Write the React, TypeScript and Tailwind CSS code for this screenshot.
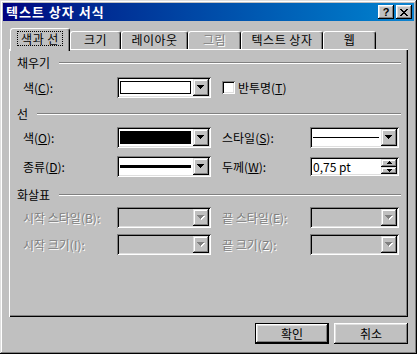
import React from "react";

const RAISED =
  "shadow-[inset_-1px_-1px_#000,inset_1px_1px_#dfdfdf,inset_-2px_-2px_#808080,inset_2px_2px_#fff]";
const BTN =
  "shadow-[inset_-1px_-1px_#000,inset_1px_1px_#fff,inset_-2px_-2px_#808080,inset_2px_2px_#dfdfdf]";
const SUNKEN =
  "shadow-[inset_1px_1px_#808080,inset_-1px_-1px_#fff,inset_2px_2px_#000,inset_-2px_-2px_#dfdfdf]";
const DIS = "text-[#808080] [text-shadow:1px_1px_0_#fff]";

function Arrow({ disabled = false }: { disabled?: boolean }) {
  const rows: [number, number][] = [
    [0, 7],
    [1, 5],
    [2, 3],
    [3, 1],
  ];
  return (
    <svg width="8" height="5" viewBox="0 0 8 5" shapeRendering="crispEdges">
      {disabled &&
        rows.map(([y, w], i) => (
          <rect key={"s" + i} x={y + 1} y={y + 1} width={w} height={1} fill="#fff" />
        ))}
      {rows.map(([y, w], i) => (
        <rect key={i} x={y} y={y} width={w} height={1} fill={disabled ? "#808080" : "#000"} />
      ))}
    </svg>
  );
}

function SmallArrow({ up }: { up: boolean }) {
  const rows: [number, number][] = up
    ? [
        [2, 1],
        [1, 3],
        [0, 5],
      ]
    : [
        [0, 5],
        [1, 3],
        [2, 1],
      ];
  return (
    <svg width="5" height="3" viewBox="0 0 5 3" shapeRendering="crispEdges">
      {rows.map(([x, w], i) => (
        <rect key={i} x={x} y={i} width={w} height={1} fill="#000" />
      ))}
    </svg>
  );
}

function Combo({
  width,
  disabled = false,
  children,
}: {
  width: string;
  disabled?: boolean;
  children?: React.ReactNode;
}) {
  return (
    <div className={`${width} h-[21px] p-[2px] flex ${SUNKEN} ${disabled ? "bg-[#c0c0c0]" : "bg-white"}`}>
      <div className="flex-1 min-w-0 flex">{children}</div>
      <div className={`w-[16px] h-full bg-[#c0c0c0] flex items-center justify-center ${RAISED}`}>
        <Arrow disabled={disabled} />
      </div>
    </div>
  );
}

function Swatch({ black = false }: { black?: boolean }) {
  return (
    <div className="flex-1 pl-[1px] pr-[2px] py-[2px]">
      <div className={`h-full border border-black ${black ? "bg-black" : "bg-white"}`} />
    </div>
  );
}

function LineSample({ thick = false }: { thick?: boolean }) {
  return (
    <div className="flex-1 flex items-center pl-[1px] pr-[2px]">
      <div className={`w-full bg-black ${thick ? "h-[3px]" : "h-[1px]"}`} />
    </div>
  );
}

function Header({ text }: { text: string }) {
  return (
    <div className="flex items-center h-[14px]">
      <span className="leading-[14px]">{text}</span>
      <div className="flex-1 ml-[9px] h-[2px] border-t border-t-[#808080] border-b border-b-white" />
    </div>
  );
}

function Label({
  pre,
  u,
  disabled = false,
  width,
}: {
  pre: string;
  u: string;
  disabled?: boolean;
  width: string;
}) {
  return (
    <div className={`${width} leading-[14px] whitespace-nowrap ${disabled ? DIS : "text-black"}`}>
      {pre}(
      {disabled ? u : <span className="underline underline-offset-[1px]">{u}</span>}):
    </div>
  );
}

function Tab({
  label,
  width,
  selected = false,
  disabled = false,
}: {
  label: string;
  width: string;
  selected?: boolean;
  disabled?: boolean;
}) {
  if (selected) {
    return (
      <div
        className={`${width} relative z-10 h-[23px] -mb-[2px] bg-[#c0c0c0] border-l border-t border-r border-l-white border-t-white border-r-black rounded-t-[3px] shadow-[inset_-1px_0_#808080] flex justify-center items-start pt-[2px]`}
      >
        <span className="border border-dotted border-black px-[3px] leading-[13px] tracking-[0.5px]">{label}</span>
      </div>
    );
  }
  return (
    <div
      className={`${width} h-[18px] bg-[#c0c0c0] border-l border-t border-r border-l-white border-t-white border-r-black rounded-t-[3px] shadow-[inset_-1px_0_#808080] flex justify-center items-start`}
    >
      <span className={`leading-[14px] pt-[1px] tracking-[0.5px] ${disabled ? DIS : "text-black"}`}>{label}</span>
    </div>
  );
}

function CloseGlyph() {
  const rows: [number, number, number, number][] = [
    [0, 2, 6, 2],
    [1, 2, 5, 2],
    [2, 4, 0, 0],
    [3, 2, 0, 0],
    [2, 4, 0, 0],
    [1, 2, 5, 2],
    [0, 2, 6, 2],
  ];
  return (
    <svg width="8" height="7" viewBox="0 0 8 7" shapeRendering="crispEdges">
      {rows.map(([x1, w1, x2, w2], i) => (
        <g key={i}>
          <rect x={x1} y={i} width={w1} height={1} fill="#000" />
          {w2 > 0 && <rect x={x2} y={i} width={w2} height={1} fill="#000" />}
        </g>
      ))}
    </svg>
  );
}

export default function App() {
  return (
    <div
      className={`w-[417px] h-[354px] bg-[#c0c0c0] p-[3px] flex flex-col text-[12px] font-['Noto_Sans_CJK_KR',sans-serif] shadow-[inset_-1px_-1px_#000,inset_1px_1px_#dfdfdf,inset_-2px_-2px_#808080,inset_2px_2px_#fff]`}
    >
      {/* Title bar */}
      <div className="h-[18px] flex items-center bg-linear-to-r from-[#000080] to-[#1084d0] pl-[3px] pr-[2px]">
        <span className="flex-1 text-white font-bold text-[13px] leading-[14px] tracking-[1px]">텍스트 상자 서식</span>
        <div className="flex gap-[2px]">
          <div
            className={`w-[16px] h-[14px] bg-[#c0c0c0] flex items-center justify-center ${BTN} font-['Liberation_Sans',sans-serif] font-bold text-[11px] leading-[11px] text-black`}
          >
            ?
          </div>
          <div className={`w-[16px] h-[14px] bg-[#c0c0c0] flex items-center justify-center ${BTN}`}>
            <CloseGlyph />
          </div>
        </div>
      </div>

      {/* Tabs */}
      <div className="mt-[7px] h-[21px] flex items-end pl-[7px]">
        <Tab label="색과 선" width="w-[60px]" selected />
        <Tab label="크기" width="w-[51px]" />
        <Tab label="레이아웃" width="w-[67px]" />
        <Tab label="그림" width="w-[53px]" disabled />
        <Tab label="텍스트 상자" width="w-[82px]" />
        <Tab label="웹" width="w-[53px]" />
      </div>

      {/* Panel */}
      <div
        className={`mx-[6px] h-[268px] bg-[#c0c0c0] pt-[7px] pl-[8px] pr-[7px] flex flex-col shadow-[inset_1px_1px_#fff,inset_-1px_-1px_#000,inset_-2px_-2px_#808080]`}
      >
        <Header text="채우기" />
        <div className="mt-[7px] flex items-center pl-[6px]">
          <Label pre="색" u="C" width="w-[94px]" />
          <Combo width="w-[94px]">
            <Swatch />
          </Combo>
          <div className="ml-[11px] flex items-center">
            <div className={`w-[13px] h-[13px] bg-white ${SUNKEN}`} />
            <span className="ml-[3px] leading-[14px]">
              반투명(<span className="underline underline-offset-[1px]">T</span>)
            </span>
          </div>
        </div>

        <div className="mt-[9px]">
          <Header text="선" />
        </div>
        <div className="mt-[6px] flex items-center pl-[6px]">
          <Label pre="색" u="O" width="w-[94px]" />
          <Combo width="w-[94px]">
            <Swatch black />
          </Combo>
          <div className="ml-[11px] flex items-center">
            <Label pre="스타일" u="S" width="w-[88px]" />
            <Combo width="w-[89px]">
              <LineSample />
            </Combo>
          </div>
        </div>
        <div className="mt-[8px] flex items-center pl-[6px]">
          <Label pre="종류" u="D" width="w-[94px]" />
          <Combo width="w-[94px]">
            <LineSample thick />
          </Combo>
          <div className="ml-[11px] flex items-center">
            <Label pre="두께" u="W" width="w-[88px]" />
            <div className={`w-[89px] h-[19px] p-[2px] flex bg-white ${SUNKEN}`}>
              <div className="flex-1 flex items-center pl-[1px] leading-[14px] text-black">0,75 pt</div>
              <div className="w-[16px] flex flex-col">
                <div className={`flex-1 bg-[#c0c0c0] flex items-center justify-center ${RAISED}`}>
                  <SmallArrow up />
                </div>
                <div className={`flex-1 bg-[#c0c0c0] flex items-center justify-center ${RAISED}`}>
                  <SmallArrow up={false} />
                </div>
              </div>
            </div>
          </div>
        </div>

        <div className="mt-[11px]">
          <Header text="화살표" />
        </div>
        <div className="mt-[5px] flex items-center pl-[6px]">
          <Label pre="시작 스타일" u="B" width="w-[94px]" disabled />
          <Combo width="w-[94px]" disabled />
          <div className="ml-[11px] flex items-center">
            <Label pre="끝 스타일" u="E" width="w-[88px]" disabled />
            <Combo width="w-[89px]" disabled />
          </div>
        </div>
        <div className="mt-[6px] flex items-center pl-[6px]">
          <Label pre="시작 크기" u="I" width="w-[94px]" disabled />
          <Combo width="w-[94px]" disabled />
          <div className="ml-[11px] flex items-center">
            <Label pre="끝 크기" u="Z" width="w-[88px]" disabled />
            <Combo width="w-[89px]" disabled />
          </div>
        </div>
      </div>

      {/* Buttons */}
      <div className="mt-[6px] flex justify-end gap-[5px] pr-[6px]">
        <div className="w-[74px] h-[21px] border border-black bg-[#c0c0c0]">
          <div className={`w-full h-full flex items-center justify-center leading-[14px] ${BTN}`}>확인</div>
        </div>
        <div
          className={`w-[74px] h-[21px] bg-[#c0c0c0] flex items-center justify-center leading-[14px] ${BTN}`}
        >
          취소
        </div>
      </div>
    </div>
  );
}
